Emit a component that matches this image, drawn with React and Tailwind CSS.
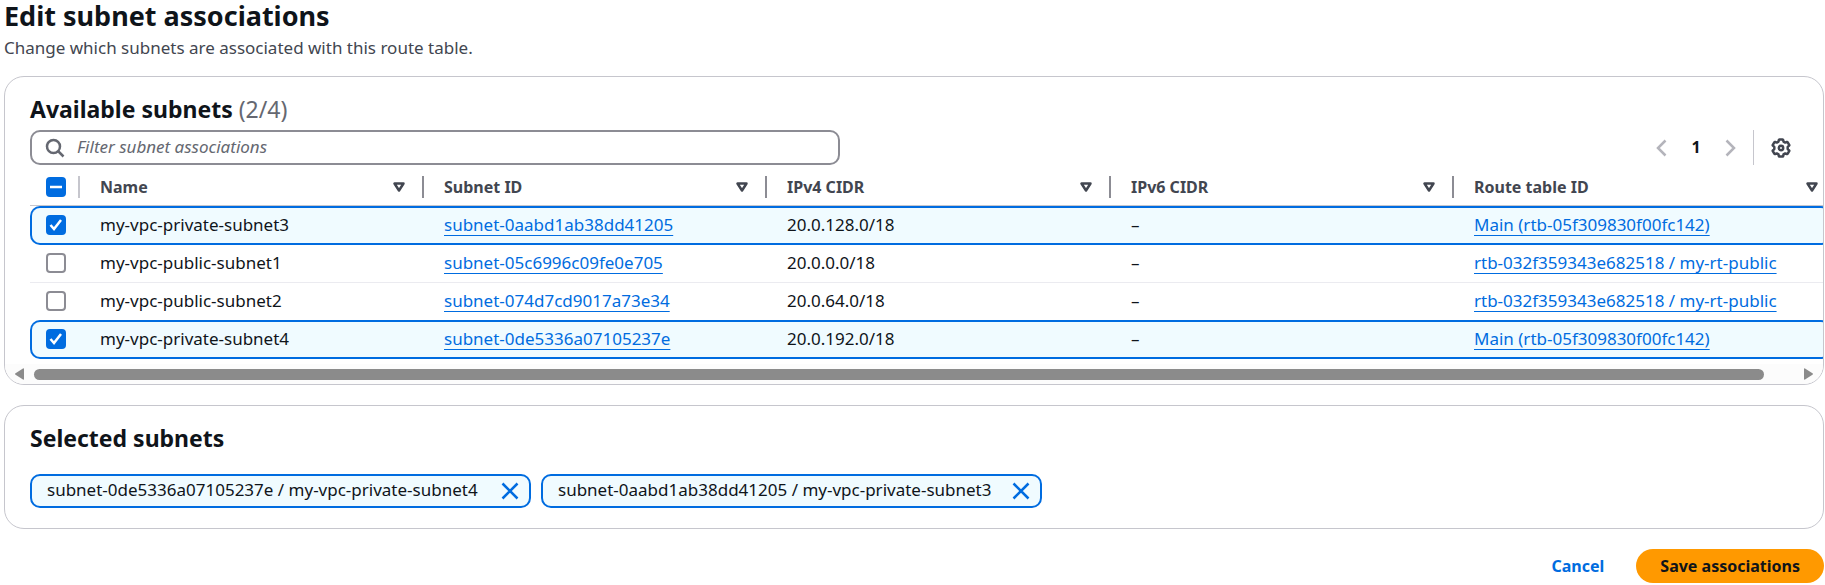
import { useState } from "react";

const columns = ["Name", "Subnet ID", "IPv4 CIDR", "IPv6 CIDR", "Route table ID"];

const subnets = [
  { name: "my-vpc-private-subnet3", id: "subnet-0aabd1ab38dd41205", v4: "20.0.128.0/18", route: "Main (rtb-05f309830f00fc142)" },
  { name: "my-vpc-public-subnet1", id: "subnet-05c6996c09fe0e705", v4: "20.0.0.0/18", route: "rtb-032f359343e682518 / my-rt-public" },
  { name: "my-vpc-public-subnet2", id: "subnet-074d7cd9017a73e34", v4: "20.0.64.0/18", route: "rtb-032f359343e682518 / my-rt-public" },
  { name: "my-vpc-private-subnet4", id: "subnet-0de5336a07105237e", v4: "20.0.192.0/18", route: "Main (rtb-05f309830f00fc142)" },
];

function Checkbox({ label, checked, mixed, onChange }) {
  const filled = checked || mixed;
  return (
    <label className="grid size-5 cursor-pointer">
      <input
        type="checkbox"
        aria-label={label}
        checked={checked}
        ref={(el) => {
          if (el) el.indeterminate = Boolean(mixed);
        }}
        onChange={onChange}
        className={
          "col-start-1 row-start-1 size-5 appearance-none rounded-[4px] " +
          (filled ? "bg-[#006ce0]" : "border-2 border-[#8c8c94] bg-white")
        }
      />
      {filled && (
        <svg viewBox="0 0 20 20" aria-hidden="true" className="pointer-events-none col-start-1 row-start-1 size-5 fill-none stroke-white" strokeWidth="2.5">
          {mixed ? <path d="M4 10h12" /> : <path d="M4.500 10l3.500 4L15 5" />}
        </svg>
      )}
    </label>
  );
}

function SortIcon() {
  return (
    <svg viewBox="0 0 14 12" aria-hidden="true" className="h-3 w-3.5 fill-none stroke-[#424650]" strokeWidth="2.5" strokeLinejoin="round">
      <path d="M2.5 2.5h9L7 9.5z" />
    </svg>
  );
}

function Link({ children }) {
  return (
    <a href="#" className="text-[#006ce0] underline decoration-1 underline-offset-4 [text-decoration-skip-ink:none]">
      {children}
    </a>
  );
}

export default function App() {
  const [selected, setSelected] = useState([subnets[3].id, subnets[0].id]);
  const toggle = (id) =>
    setSelected((list) => (list.includes(id) ? list.filter((x) => x !== id) : [...list, id]));
  const all = selected.length === subnets.length;

  return (
    <main className="bg-white pl-1 pr-px font-['Noto_Sans',sans-serif] text-[17px] leading-6 text-[#0f141a]">
      <header className="pb-4">
        <h1 className="text-[27px] font-bold leading-8">Edit subnet associations</h1>
        <p className="pt-1 text-[#424650]">Change which subnets are associated with this route table.</p>
      </header>

      <section className="overflow-hidden rounded-[20px] border border-[#c6c6cd]">
        <div className="px-[25px] pt-[18px]">
          <h2 className="text-[23px] font-bold leading-7">
            Available subnets <span className="font-normal text-[#656871]">(2/4)</span>
          </h2>
          <div className="mt-[7px] flex items-center justify-between">
            <div className="flex h-[35px] w-11/24 items-center gap-3 rounded-[10px] border-2 border-[#8c8c94] px-[13px]">
              <svg viewBox="0 0 20 20" aria-hidden="true" className="size-5 shrink-0 fill-none stroke-[#656871]" strokeWidth="2.5">
                <circle cx="8.5" cy="8.5" r="6.5" />
                <path d="M13 13l5.5 5.5" />
              </svg>
              <input
                type="text"
                aria-label="Filter subnet associations"
                placeholder="Filter subnet associations"
                className="min-w-0 flex-1 bg-transparent pb-0.5 outline-none placeholder:italic placeholder:text-[#656871]"
              />
            </div>
            <div className="flex items-center pr-[7px]">
              <button type="button" aria-label="Previous page" className="p-1">
                <svg viewBox="0 0 12 18" aria-hidden="true" className="h-[18px] w-3 fill-none stroke-[#b4b4bb]" strokeWidth="2.5">
                  <path d="M10.5 1.5L3 9l7.5 7.5" />
                </svg>
              </button>
              <span className="w-[50px] pb-0.5 text-center text-base font-bold">1</span>
              <button type="button" aria-label="Next page" className="p-1">
                <svg viewBox="0 0 12 18" aria-hidden="true" className="h-[18px] w-3 fill-none stroke-[#b4b4bb]" strokeWidth="2.5">
                  <path d="M1.5 1.5L9 9l-7.5 7.5" />
                </svg>
              </button>
              <div className="ml-3 h-[35px] border-l border-[#c6c6cd] pl-[17px]" />
              <button type="button" aria-label="Preferences">
                <svg viewBox="0 0 20 20" aria-hidden="true" className="size-5 fill-none stroke-[#424650]" strokeWidth="2.5" strokeLinejoin="round">
                  <path d="M8.400 1.400h3.200q.5 0 .6.600l.3 1.600 1.700 1 1.600-.6q.6-.2.900.3l1.500 2.500q.3.500-.2.900L16.700 8.900v2.200l1.300 1.200q.5.400.2.900l-1.500 2.500q-.3.500-.9.300l-1.600-.6-1.700 1-.3 1.600q-.1.600-.6.600H8.400q-.5 0-.6-.6l-.3-1.600-1.700-1-1.600.6q-.6.200-.9-.3l-1.500-2.500q-.3-.5.200-.9l1.300-1.200V8.900L2 7.700q-.5-.4-.2-.9l1.500-2.500q.3-.5.900-.3l1.600.6 1.700-1L7.800 2q.1-.6.600-.6z" />
                  <circle cx="10" cy="10" r="2.200" />
                </svg>
              </button>
            </div>
          </div>
        </div>

        <div className="overflow-x-auto pl-[25px] [scrollbar-width:none]">
          <table className="w-full min-w-[1801px] table-fixed border-separate border-spacing-0 text-left">
            <colgroup>
              <col className="w-[50px]" />
              <col className="w-[344px]" />
              <col className="w-[343px]" />
              <col className="w-[344px]" />
              <col className="w-[343px]" />
              <col />
            </colgroup>
            <thead>
              <tr className="h-[41px]">
                <th className="border-b border-[#c6c6cd] p-0 pt-1">
                  <div className="flex items-center justify-between pl-4">
                    <Checkbox
                      label="Select all subnets"
                      checked={all}
                      mixed={selected.length > 0 && !all}
                      onChange={() => setSelected(all ? [] : subnets.map((s) => s.id))}
                    />
                    <span className="h-[22px] w-0.5 bg-[#c6c6cd]" />
                  </div>
                </th>
                {columns.map((c, i) => (
                  <th key={c} className="border-b border-[#c6c6cd] p-0 pt-1 font-bold text-[#424650]">
                    <div className="flex items-center pl-5 text-base">
                      <span className="flex-1">{c}</span>
                      <button type="button" aria-label={"Sort by " + c} className={i < 4 ? "mr-4" : "mr-3"}>
                        <SortIcon />
                      </button>
                      {i < 4 && <span className="h-[22px] w-0.5 bg-[#8c8c94]" />}
                    </div>
                  </th>
                ))}
              </tr>
            </thead>
            <tbody>
              {subnets.map((s, i) => {
                const on = selected.includes(s.id);
                const nextOn = i < 3 && selected.includes(subnets[i + 1].id);
                const cell = on
                  ? "border-y-2 border-[#006ce0] bg-[#f0fbff] p-0 pb-0.5 "
                  : nextOn
                    ? "p-0 pb-0.5 "
                    : "border-b border-[#ebebf0] p-0 pb-0.5 ";
                return (
                  <tr key={s.id} className={on ? "h-[39px]" : nextOn ? "h-[37px]" : "h-[38px]"}>
                    <td className={cell + (on ? "rounded-l-[10px] border-l-2 pl-3.5" : "pl-4")}>
                      <Checkbox label={"Select " + s.name} checked={on} onChange={() => toggle(s.id)} />
                    </td>
                    <td className={cell + "pl-5"}>{s.name}</td>
                    <td className={cell + "pl-5"}><Link>{s.id}</Link></td>
                    <td className={cell + "pl-5"}>{s.v4}</td>
                    <td className={cell + "pl-5"}>–</td>
                    <td className={cell + "pl-5" + (on ? " rounded-r-[10px] border-r-2" : "")}><Link>{s.route}</Link></td>
                  </tr>
                );
              })}
            </tbody>
          </table>
        </div>

        <div className="mt-[5px] flex h-5 items-center gap-2.5 bg-[#fcfcfc] px-2.5" aria-hidden="true">
          <svg viewBox="0 0 9 12" className="h-3 w-[9px] fill-[#8b8b8b]"><path d="M9 1v10q0 1-1 .6L.5 6.700q-.8-.7 0-1.400L8 .4Q9 0 9 1z" /></svg>
          <div className="flex-1 pr-[30px]">
            <div className="h-[11px] rounded-full bg-[#8b8b8b]" />
          </div>
          <svg viewBox="0 0 9 12" className="h-3 w-[9px] fill-[#8b8b8b]"><path d="M0 1v10q0 1 1 .6l7.500-4.900q.8-.7 0-1.400L1 .4Q0 0 0 1z" /></svg>
        </div>
      </section>

      <section className="mt-5 rounded-[20px] border border-[#c6c6cd] px-[25px] pb-5 pt-[18px]">
        <h2 className="text-[23px] font-bold leading-7">Selected subnets</h2>
        <ul className="flex flex-wrap gap-2.5 pt-[22px]">
          {selected.map((id) => (
            <li key={id} className="flex h-[34px] min-w-[501px] items-center justify-between gap-3 rounded-[10px] border-2 border-[#006ce0] bg-[#f0fbff] pl-[15px] pr-2.5">
              <span className="pb-0.5">{id} / {subnets.find((s) => s.id === id).name}</span>
              <button type="button" aria-label={"Remove " + id} onClick={() => toggle(id)}>
                <svg viewBox="0 0 18 18" aria-hidden="true" className="size-[18px] fill-none stroke-[#006ce0]" strokeWidth="2.5">
                  <path d="M1.500 1.500l15 15M16.500 1.500l-15 15" />
                </svg>
              </button>
            </li>
          ))}
        </ul>
      </section>

      <footer className="flex items-center justify-end gap-8 pt-5 text-base font-bold">
        <button type="button" className="text-[#006ce0]">Cancel</button>
        <button type="button" className="h-[34px] rounded-full bg-[#ff9900] px-6">Save associations</button>
      </footer>
    </main>
  );
}
